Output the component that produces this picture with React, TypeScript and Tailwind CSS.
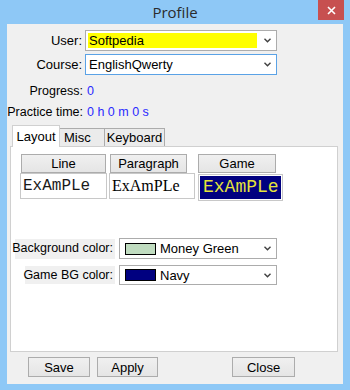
import React from 'react'

const Chevron = () => (
  <svg width="7" height="5" viewBox="0 0 7 5" className="shrink-0">
    <path d="M0.5 0.8 L3.5 3.8 L6.5 0.8" fill="none" stroke="#404040" strokeWidth="1.4" />
  </svg>
)

interface ComboProps {
  value: string
  width: string
  height: string
  focused?: boolean
  highlight?: boolean
  swatch?: string
}

const Combo: React.FC<ComboProps> = ({ value, width, height, focused, highlight, swatch }) => (
  <div
    className={`${width} ${height} flex items-center bg-white border ${
      focused ? 'border-[#5aa2e6]' : 'border-[#acacac]'
    }`}
  >
    <div className="flex-1 h-full flex items-center p-[2px]">
      <div className={`flex-1 h-full flex items-center gap-[4px] ${highlight ? 'bg-[#ffff00]' : ''} pl-[1px]`}>
        {swatch && <div className={`w-[31px] h-[12px] border border-black ml-[2px] ${swatch}`} />}
        <span className="leading-none">{value}</span>
      </div>
    </div>
    <div className="w-[17px] h-full flex items-center justify-center">
      <Chevron />
    </div>
  </div>
)

const WinButton: React.FC<{ label: string; width: string; height?: string }> = ({ label, width, height = 'h-[20px]' }) => (
  <div
    className={`${width} ${height} flex items-center justify-center border border-[#acacac] bg-gradient-to-b from-[#f0f0f0] to-[#e5e5e5] text-[13px] leading-none text-black`}
  >
    {label}
  </div>
)

export default function App() {
  return (
    <div
      className="w-[350px] h-[390px] bg-[#8ec8f6] flex flex-col text-[12.5px] text-black"
      style={{ fontFamily: '"Liberation Sans", Arial, sans-serif' }}
    >
      {/* title bar */}
      <div className="relative h-[24px] shrink-0 flex items-center justify-center">
        <span className="text-[15px] text-[#2b2b2b] leading-none" style={{ fontFamily: '"Open Sans", "Noto Sans", sans-serif' }}>
          Profile
        </span>
        <div className="absolute right-[6px] top-0 w-[26px] h-[20px] bg-[#c75050] flex items-center justify-center">
          <svg width="9" height="9" viewBox="0 0 9 9">
            <path d="M1 1 L8 8 M8 1 L1 8" stroke="white" strokeWidth="1.6" />
          </svg>
        </div>
      </div>

      {/* client area */}
      <div className="mx-[7px] mb-[6px] flex-1 bg-[#f0f0f0] flex flex-col pt-[6px]">
        <div className="flex items-center h-[21px]">
          <div className="w-[76px] text-right pr-[1px] text-[13px]">User:</div>
          <div className="ml-[2px] text-[13px]">
            <Combo value="Softpedia" width="w-[192px]" height="h-[21px]" highlight />
          </div>
        </div>
        <div className="flex items-center h-[21px] mt-[3px]">
          <div className="w-[76px] text-right pr-[1px] text-[13px]">Course:</div>
          <div className="ml-[2px] text-[13px]">
            <Combo value="EnglishQwerty" width="w-[192px]" height="h-[21px]" focused />
          </div>
        </div>
        <div className="flex items-center h-[16px] mt-[8px]">
          <div className="w-[76px] text-right whitespace-nowrap">Progress:</div>
          <div className="ml-[4px] text-[#2a2aff]">0</div>
        </div>
        <div className="flex items-center h-[16px] mt-[5px]">
          <div className="w-[76px] flex justify-end whitespace-nowrap">Practice time:</div>
          <div className="ml-[4px] text-[#2a2aff] whitespace-nowrap">0 h 0 m 0 s</div>
        </div>

        {/* tabs */}
        <div className="flex items-end h-[21px] mt-[5px] ml-[5px] relative z-10 text-[13px]">
          <div className="w-[48px] h-[22px] bg-white border border-[#d0d0d0] border-b-0 flex items-center justify-center -mb-[1px]">
            Layout
          </div>
          <div className="w-[45px] h-[18px] bg-[#ebebeb] border border-[#acacac] border-l-0 border-b-0 flex items-center pl-[4px]">
            Misc
          </div>
          <div className="w-[60px] h-[18px] bg-[#ebebeb] border border-[#acacac] border-l-0 border-b-0 flex items-center justify-center">
            Keyboard
          </div>
        </div>

        {/* tab panel */}
        <div className="ml-[3px] w-[328px] h-[206px] bg-white border border-[#d0d0d0] flex flex-col pt-[7px]">
          <div className="flex ml-[9px]">
            <div className="w-[87px] flex flex-col">
              <div className="ml-[1px]">
                <WinButton label="Line" width="w-[85px]" height="h-[19px]" />
              </div>
              <div className="w-[87px] h-[26px] border border-[#c8c8c8] flex items-center pl-[2px] text-[16px] text-[#1a1a1a]" style={{ fontFamily: '"Liberation Mono", "Courier New", monospace' }}>
                ExAmPLe
              </div>
            </div>
            <div className="w-[86px] ml-[2px] flex flex-col">
              <div className="ml-[1px]">
                <WinButton label="Paragraph" width="w-[77px]" height="h-[19px]" />
              </div>
              <div className="w-[86px] h-[26px] border border-[#c8c8c8] flex items-center pl-[2px] text-[16px] text-black" style={{ fontFamily: '"Liberation Serif", "Times New Roman", serif' }}>
                ExAmPLe
              </div>
            </div>
            <div className="w-[85px] ml-[3px] flex flex-col">
              <WinButton label="Game" width="w-[78px]" height="h-[19px]" />
              <div className="w-[85px] h-[27px] border border-[#c8c8c8] p-[1px] mt-[1px]">
                <div className="w-full h-full bg-[#000080] flex items-center pl-[3px] text-[18px] text-[#e4e43a]" style={{ fontFamily: '"Liberation Mono", "Courier New", monospace' }}>
                  ExAmPLe
                </div>
              </div>
            </div>
          </div>

          <div className="flex items-center mt-[37px] text-[12px]">
            <div className="ml-[4px] w-[100px] h-[20px] bg-[#f0f0f0] flex items-center justify-end pr-[2px] whitespace-nowrap text-[12.5px]">
              Background color:
            </div>
            <div className="ml-[4px] text-[13px]">
              <Combo value="Money Green" width="w-[158px]" height="h-[21px]" swatch="bg-[#c0dcc0]" />
            </div>
          </div>
          <div className="flex items-center mt-[6px]">
            <div className="ml-[14px] w-[90px] h-[18px] bg-[#f0f0f0] flex items-center justify-end pr-[2px] whitespace-nowrap">
              Game BG color:
            </div>
            <div className="ml-[4px] text-[13px]">
              <Combo value="Navy" width="w-[158px]" height="h-[20px]" swatch="bg-[#000080]" />
            </div>
          </div>
        </div>

        {/* bottom buttons */}
        <div className="flex mt-[5px]">
          <div className="ml-[21px]">
            <WinButton label="Save" width="w-[62px]" />
          </div>
          <div className="ml-[7px]">
            <WinButton label="Apply" width="w-[61px]" />
          </div>
          <div className="ml-[74px]">
            <WinButton label="Close" width="w-[63px]" />
          </div>
        </div>
      </div>
    </div>
  )
}
